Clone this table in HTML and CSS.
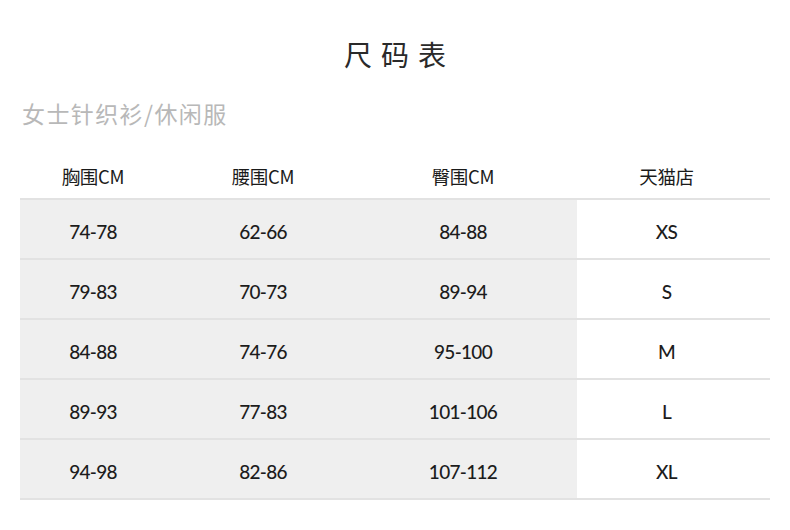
FILE: index.html
```html
<!DOCTYPE html>
<html lang="zh">
<head>
<meta charset="utf-8">
<link rel="stylesheet" href="styles.css">
</head>
<body>
<div class="page">
  <h1 class="title">尺码表</h1>
  <div class="subtitle">女士针织衫/休闲服</div>
  <div class="table">
    <div class="row head">
      <div class="cell">胸围CM</div>
      <div class="cell">腰围CM</div>
      <div class="cell c3">臀围CM</div>
      <div class="cell c4">天猫店</div>
    </div>
    <div class="row body">
      <div class="cell g">74-78</div>
      <div class="cell g">62-66</div>
      <div class="cell g c3">84-88</div>
      <div class="cell c4">XS</div>
    </div>
    <div class="row body">
      <div class="cell g">79-83</div>
      <div class="cell g">70-73</div>
      <div class="cell g c3">89-94</div>
      <div class="cell c4">S</div>
    </div>
    <div class="row body">
      <div class="cell g">84-88</div>
      <div class="cell g">74-76</div>
      <div class="cell g c3">95-100</div>
      <div class="cell c4">M</div>
    </div>
    <div class="row body">
      <div class="cell g">89-93</div>
      <div class="cell g">77-83</div>
      <div class="cell g c3">101-106</div>
      <div class="cell c4">L</div>
    </div>
    <div class="row body last">
      <div class="cell g">94-98</div>
      <div class="cell g">82-86</div>
      <div class="cell g c3">107-112</div>
      <div class="cell c4">XL</div>
    </div>
  </div>
</div>
</body>
</html>
```
FILE: styles.css
```css
html, body {
  margin: 0;
  padding: 0;
  background: #ffffff;
}
body {
  font-family: "Lato", "Noto Sans CJK SC", sans-serif;
  color: #1c1c1c;
}
.page {
  width: 790px;
  padding: 0 20px;
  box-sizing: border-box;
}
.title {
  margin: 0;
  padding-top: 36px;
  height: 36px;
  line-height: 36px;
  font-size: 28px;
  font-weight: 400;
  letter-spacing: 9px;
  text-indent: 9px;
  text-align: center;
  color: #2a2a2a;
  font-family: "Noto Sans CJK SC", sans-serif;
}
.subtitle {
  margin-top: 26px;
  height: 30px;
  line-height: 30px;
  font-size: 23px;
  letter-spacing: 1.4px;
  color: #b8b8b8;
  font-family: "Noto Sans CJK SC", sans-serif;
  padding-left: 2px;
}
.table {
  margin-top: 27px;
  width: 750px;
}
.row {
  display: grid;
  grid-template-columns: 146px 194px 217px 193px;
}
.row.head {
  height: 43px;
  font-size: 18.5px;
  font-family: "Noto Sans CJK SC", sans-serif;
  color: #1a1a1a;
}
.row.head .cell {
  letter-spacing: -0.3px;
  padding-bottom: 1px;
}
.row.body {
  height: 58px;
  border-top: 2px solid #e2e2e2;
  font-size: 19px;
  font-weight: 500;
  letter-spacing: -0.7px;
}
.row.body .cell {
  padding-top: 4px;
}
.row.last {
  border-bottom: 2px solid #e2e2e2;
}
.cell {
  display: flex;
  align-items: center;
  justify-content: center;
  box-sizing: border-box;
}
.cell.g {
  background: #efefef;
}
.cell.c3 {
  padding-right: 11px;
}
.cell.c4 {
  padding-right: 14px;
}
```
